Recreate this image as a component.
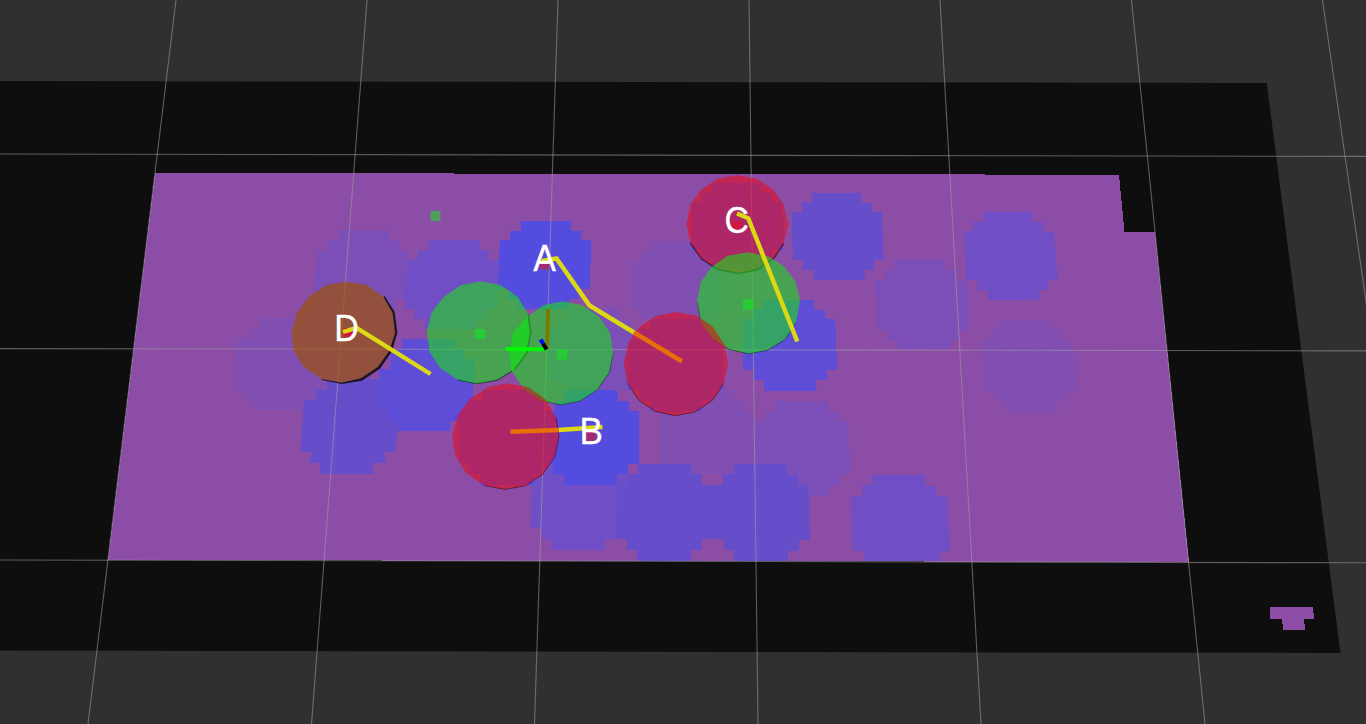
import React from "react";

// Local drawing frames: every shape is given in third-pixel units from its frame origin.
const frames = {
  northWest: "translate(220 170) scale(0.33333)",
  west: "translate(220 310) scale(0.33333)",
  robot: "translate(400 200) scale(0.33333)",
  south: "translate(420 340) scale(0.33333)",
  north: "translate(600 165) scale(0.33333)",
  center: "translate(600 310) scale(0.33333)",
  northEast: "translate(780 170) scale(0.33333)",
  southEdge: "translate(520 450) scale(0.33333)",
  east: "translate(840 310) scale(0.33333)",
};

type Frame = keyof typeof frames;
type Shape = { at: Frame; fill: string; pts: string };

const FAINT = "#814eb1";
const LIGHT = "#7b4eb8";
const MID = "#704ec5";
const STRONG = "#664ecb";
const DEEP = "#5e4dd7";
const FULL = "#544cdf";

const cells: Shape[] = [
  { at: "west", fill: FAINT, pts: "119,24 270,24 300,90 320,240 288,240 288,270 255,270 253,299 98,299 98,268 68,268 68,237 41,237 47,150 53,84 90,84 90,54 119,54" },
  { at: "northWest", fill: LIGHT, pts: "357,181 508,181 508,210 537,210 536,240 565,240 563,330 555,388 525,388 525,418 495,418 495,440 312,440 312,418 280,418 280,388 281,360 287,300 292,240 324,240 324,210 357,210" },
  { at: "northWest", fill: LIGHT, pts: "312,356 465,356 465,388 495,388 497,420 523,420 518,570 485,570 485,600 452,600 452,628 292,628 292,600 262,600 262,570 232,570 238,520 243,420 280,420 280,388 312,388" },
  { at: "west", fill: STRONG, pts: "322,206 452,206 480,207 472,297 503,297 503,332 532,332 532,362 528,426 494,426 495,459 460,459 458,491 300,491 302,459 271,459 272,426 243,426 246,350 253,270 288,270 288,240 320,240" },
  { at: "west", fill: DEEP, pts: "546,88 702,88 702,118 732,118 732,148 762,148 757,302 722,302 722,332 690,332 690,362 532,362 532,332 503,332 503,297 472,297 478,178 510,178 516,118 546,118" },
  { at: "robot", fill: MID, pts: "88,120 238,120 240,150 267,150 267,180 297,180 292,265 290,327 258,327 260,357 229,357 229,387 73,387 75,357 42,357 44,327 14,327 18,240 22,180 52,180 55,150 88,150" },
  { at: "robot", fill: FULL, pts: "363,64 513,64 513,93 543,93 543,120 573,120 570,267 537,267 537,297 507,297 507,327 355,327 352,297 324,297 324,267 294,267 297,180 300,120 330,120 330,93 363,93" },
  { at: "north", fill: FAINT, pts: "152,228 305,228 335,260 335,290 367,290 365,435 335,465 335,490 150,490 150,463 120,463 120,433 88,433 93,290 122,290 122,258 152,258" },
  { at: "center", fill: FAINT, pts: "210,240 398,240 398,272 431,272 431,304 463,304 466,462 440,462 440,492 210,492 210,462 181,462 181,270 210,270" },
  { at: "center", fill: LIGHT, pts: "-95,-3 60,-3 60,27 90,27 92,57 120,57 118,240 -103,240 -103,210 -158,210 -155,57 -122,57 -122,28 -95,28" },
  { at: "center", fill: LIGHT, pts: "526,274 682,274 684,304 714,304 714,336 746,336 748,410 751,493 720,493 720,527 690,527 690,557 500,557 466,462 466,334 495,334 495,304 526,304" },
  { at: "southEdge", fill: MID, pts: "37,40 323,40 323,104 291,104 288,267 255,267 255,299 93,299 93,267 66,267 66,233 31,233 35,104" },
  { at: "southEdge", fill: STRONG, pts: "354,42 513,42 513,72 546,72 546,104 609,104 609,72 642,72 642,42 800,42 801,75 833,75 833,106 865,106 867,190 870,269 837,269 837,302 804,302 805,334 642,334 642,300 612,300 612,267 546,267 546,300 513,300 513,333 351,333 351,300 321,300 321,267 288,267 291,104 323,104 323,72 354,72" },
  { at: "south", fill: FULL, pts: "434,150 592,150 595,182 626,182 628,212 657,212 657,372 624,372 624,402 591,402 591,435 432,435 432,402 400,402 400,372 369,372 373,212 404,212 404,182 434,182" },
  { at: "south", fill: FULL, pts: "188,150 345,150 345,180 375,180 375,212 402,212 400,370 370,370 370,402 340,402 340,435 180,435 180,402 147,402 147,370 117,370 117,242 90,242 120,212 150,212 150,180 188,180" },
  { at: "center", fill: FULL, pts: "150,27 305,27 305,57 338,57 338,90 370,90 370,240 338,240 338,272 305,272 305,304 150,304 150,272 117,272 117,240 85,240 88,90 118,90 118,57 150,57" },
  { at: "north", fill: FULL, pts: "335,54 483,54 483,83 515,83 515,112 547,112 550,255 520,255 520,284 490,284 490,312 335,312 335,284 305,284 305,255 275,255 275,112 306,112 306,83 335,83" },
  { at: "center", fill: DEEP, pts: "490,-31 642,-31 642,-1 675,-1 676,28 706,28 711,180 680,180 681,210 648,210 650,242 491,242 491,210 463,210 461,180 430,180 430,28 460,28 460,-2 490,-2" },
  { at: "northEast", fill: STRONG, pts: "95,69 243,69 245,98 275,98 277,126 306,126 308,183 311,269 282,269 283,299 252,299 255,329 102,329 101,299 70,299 69,269 39,269 36,180 37,126 66,126 66,96 95,96" },
  { at: "northEast", fill: LIGHT, pts: "343,270 495,270 496,299 527,299 528,329 562,329 564,400 567,479 538,479 538,510 510,510 510,538 354,538 353,510 322,510 321,479 291,479 288,400 285,329 316,329 316,299 343,299" },
  { at: "northEast", fill: MID, pts: "609,126 758,126 760,156 790,156 791,186 822,186 826,240 833,329 804,329 805,360 776,360 777,389 624,389 623,360 592,360 590,329 559,329 555,250 552,183 580,183 580,155 609,155" },
  { at: "east", fill: FAINT, pts: "480,30 632,30 635,60 665,60 667,90 699,90 704,150 711,244 681,244 682,274 651,274 654,305 496,305 495,274 463,274 461,244 431,244 425,150 422,90 449,90 450,60 480,60" },
  { at: "east", fill: MID, pts: "96,495 255,495 255,527 288,527 288,558 322,558 325,640 330,722 297,722 300,754 72,754 71,722 39,722 35,640 33,558 66,558 66,525 96,525" },
];

const gridLines = [
  [176, 0, 88, 724],
  [367, 0, 311.5, 724],
  [558, 0, 534.5, 724],
  [749, 0, 758, 724],
  [940, 0, 981, 724],
  [1131.5, 0, 1205, 724],
  [1322.5, 0, 1427, 724],
  [0, 154, 1366, 156.4],
  [0, 348.6, 1366, 350.9],
  [0, 560, 1366, 562.8],
];

const RED = "#e30e1f";
const GREEN = "#1bdc1b";
const BROWN = "#a05400";

type Disc = Shape & { rim: string; rimWidth: number; opacity: number };

// Listed back to front.
const discs: Disc[] = [
  { at: "robot", fill: GREEN, opacity: 0.6, rimWidth: 4, pts: "243,244 303,256 353,290 385,343 393,398 381,458 345,508 292,540 230,551 172,539 120,504 89,456 80,395 95,337 132,290 182,256", rim: "385,343 392,398 380,458 344,508 291,540 230,551 172,539" },
  { at: "robot", fill: GREEN, opacity: 0.6, rimWidth: 3, pts: "487,304 548,316 598,351 630,398 640,460 628,517 592,569 540,603 482,614 424,602 373,568 336,515 328,465 340,398 382,350 430,316", rim: "639,460 628,517 592,569 540,603 482,614 424,602 373,568" },
  { at: "north", fill: RED, opacity: 0.62, rimWidth: 5, pts: "412,30 472,42 520,74 551,119 564,178 551,235 520,280 472,312 414,323 352,311 305,280 271,233 260,178 271,119 304,74 352,41", rim: "551,235 520,281 472,314 414,325 352,313 305,281 271,234" },
  { at: "north", fill: GREEN, opacity: 0.6, rimWidth: 3, pts: "444,262 505,274 552,304 587,352 600,408 588,473 555,523 503,555 447,566 387,553 337,520 303,470 291,410 302,352 335,306 383,272", rim: "588,473 555,523 503,555 447,566 387,553 337,520 303,470 292,410" },
  { at: "south", fill: RED, opacity: 0.62, rimWidth: 3, pts: "262,130 325,142 375,178 408,232 417,288 404,350 368,403 316,437 254,448 192,436 139,400 106,348 97,290 113,226 149,178 204,142", rim: "408,232 417,288 404,350 368,403 316,437 254,448 192,436" },
  { at: "center", fill: RED, opacity: 0.62, rimWidth: 3, pts: "228,6 290,17 338,50 373,105 384,160 371,220 338,270 286,305 227,317 166,304 117,271 83,220 72,160 85,98 119,50 168,18", rim: "371,220 338,270 286,305 227,317 166,304 117,271 83,220" },
  { at: "west", fill: BROWN, opacity: 0.67, rimWidth: 0, pts: "380,-85 440,-75 490,-40 520,8 527,68 512,122 477,172 425,208 365,219 305,207 252,172 221,122 215,66 230,10 270,-43 320,-75", rim: "" },
];

// Regions where two discs intersect.
const overlaps: Shape[] = [
  { at: "robot", fill: "#24cc2a", pts: "385,345 393,398 381,458 345,508 338,511 335,510 328,465 340,398 382,350" },
  { at: "center", fill: "#98512a", pts: "300,25 338,50 373,105 378,113 337,85 303,38" },
  { at: "south", fill: "#8d5428", pts: "307,139 325,142 375,178 378,186 364,182 318,152" },
];

function DiscShape({ disc }: { disc: Disc }) {
  return (
    <g transform={frames[disc.at]}>
      <polyline points={disc.rim} fill="none" stroke="#18142a" strokeOpacity="0.75" strokeWidth={disc.rimWidth} />
      <polygon points={disc.pts} fill={disc.fill} fillOpacity={disc.opacity} />
    </g>
  );
}

export default function App() {
  return (
    <main className="h-[724px] w-full overflow-hidden bg-[#303030]">
      <svg className="block h-[724px] w-[1366px]" viewBox="0 0 1366 724">
        <polygon points="0,81 1266.7,83 1340.5,653 0,650.5" fill="#0e0e0e" />
        <g shapeRendering="crispEdges">
          <polygon points="155,173 454,173 454,174 985,174 985,175 1119,175 1124.5,232 1155,232 1189,562 108,560" fill="#8b4da5" />
          <polygon points="1269.5,607 1313,607 1314,618.7 1304,618.7 1305,629.7 1283,629.7 1282,618.7 1270.5,618.7" fill="#8b4da5" />
          {cells.map((c, i) => (
            <polygon key={i} transform={frames[c.at]} points={c.pts} fill={c.fill} />
          ))}
        </g>

        <g stroke="#a0a0a4" strokeOpacity="0.55" strokeWidth="1.1">
          {gridLines.map(([x1, y1, x2, y2], i) => (
            <line key={i} x1={x1} y1={y1} x2={x2} y2={y2} />
          ))}
        </g>

        <rect x="430.5" y="211" width="10" height="10" fill="#4f9c5d" />
        <rect x="539.5" y="259.5" width="10" height="10" fill="#a02c72" />
        <rect x="586" y="431.5" width="10.5" height="10" fill="#a02c72" />

        {discs.map((d, i) => (
          <DiscShape key={i} disc={d} />
        ))}
        <g transform={frames.west}>
          <polygon points="490,-40 494,-42 524,6 532,68 516,124 480,176 426,212 365,222 305,210 305,207 365,218 423,205 474,170 509,121 525,68 518,9" fill="#1b1524" />
        </g>
        {overlaps.map((o, i) => (
          <polygon key={i} transform={frames[o.at]} points={o.pts} fill={o.fill} />
        ))}
        <polyline transform={frames.robot} points="385,345 392,398 381,458 345,508" fill="none" stroke="#258f2b" strokeWidth="5" />

        <line x1="548" y1="309" x2="547" y2="349" stroke="#7a7a00" strokeWidth="3.8" />
        <line x1="505.5" y1="349" x2="546" y2="349.3" stroke="#00f800" strokeWidth="4" />
        <line x1="543" y1="343.5" x2="546.5" y2="349.5" stroke="#000014" strokeWidth="4" />
        <line x1="540.6" y1="339.5" x2="543" y2="343.5" stroke="#0000ff" strokeWidth="4" />

        <g fill="#26cc31">
          <rect x="475.3" y="329" width="10" height="10" />
          <rect x="557" y="349.5" width="10.3" height="10" />
          <rect x="743" y="299.3" width="10.6" height="10.4" />
        </g>
        <rect x="732.3" y="221.5" width="9.5" height="8.5" fill="#d0183f" />
        <rect x="343.5" y="328" width="9.5" height="9" fill="#d0183f" />

        <g fill="none" stroke="#dcd814" strokeWidth="4.4">
          <polyline points="541.7,261 556.5,258.5 589.5,305.5 634,332.5" />
          <polyline points="558.5,430 602.5,427" />
        </g>
        <g fill="none" stroke="#e86e08" strokeWidth="4.4">
          <line x1="634" y1="332.5" x2="682" y2="361.5" />
          <line x1="510.5" y1="431.8" x2="558.5" y2="430" />
        </g>
        <polyline points="343,332 356.5,328 430.5,374" fill="none" stroke="#dcd814" strokeWidth="4.4" />

        <g className="font-['Liberation_Sans',sans-serif] text-[37px]" fill="#fff" stroke="#fff" strokeWidth="0.3">
          <text transform="translate(533.2 271.4) scale(0.92 1)">A</text>
          <text transform="translate(579.5 444.2) scale(0.95 1)">B</text>
          <text transform="translate(724.4 233) scale(0.91 1)">C</text>
          <text transform="translate(334.2 340.6) scale(0.92 1)">D</text>
        </g>
        <polyline points="737,213.5 748.3,218.3 797.3,341.5" fill="none" stroke="#dcd814" strokeWidth="4.4" />
      </svg>
    </main>
  );
}
